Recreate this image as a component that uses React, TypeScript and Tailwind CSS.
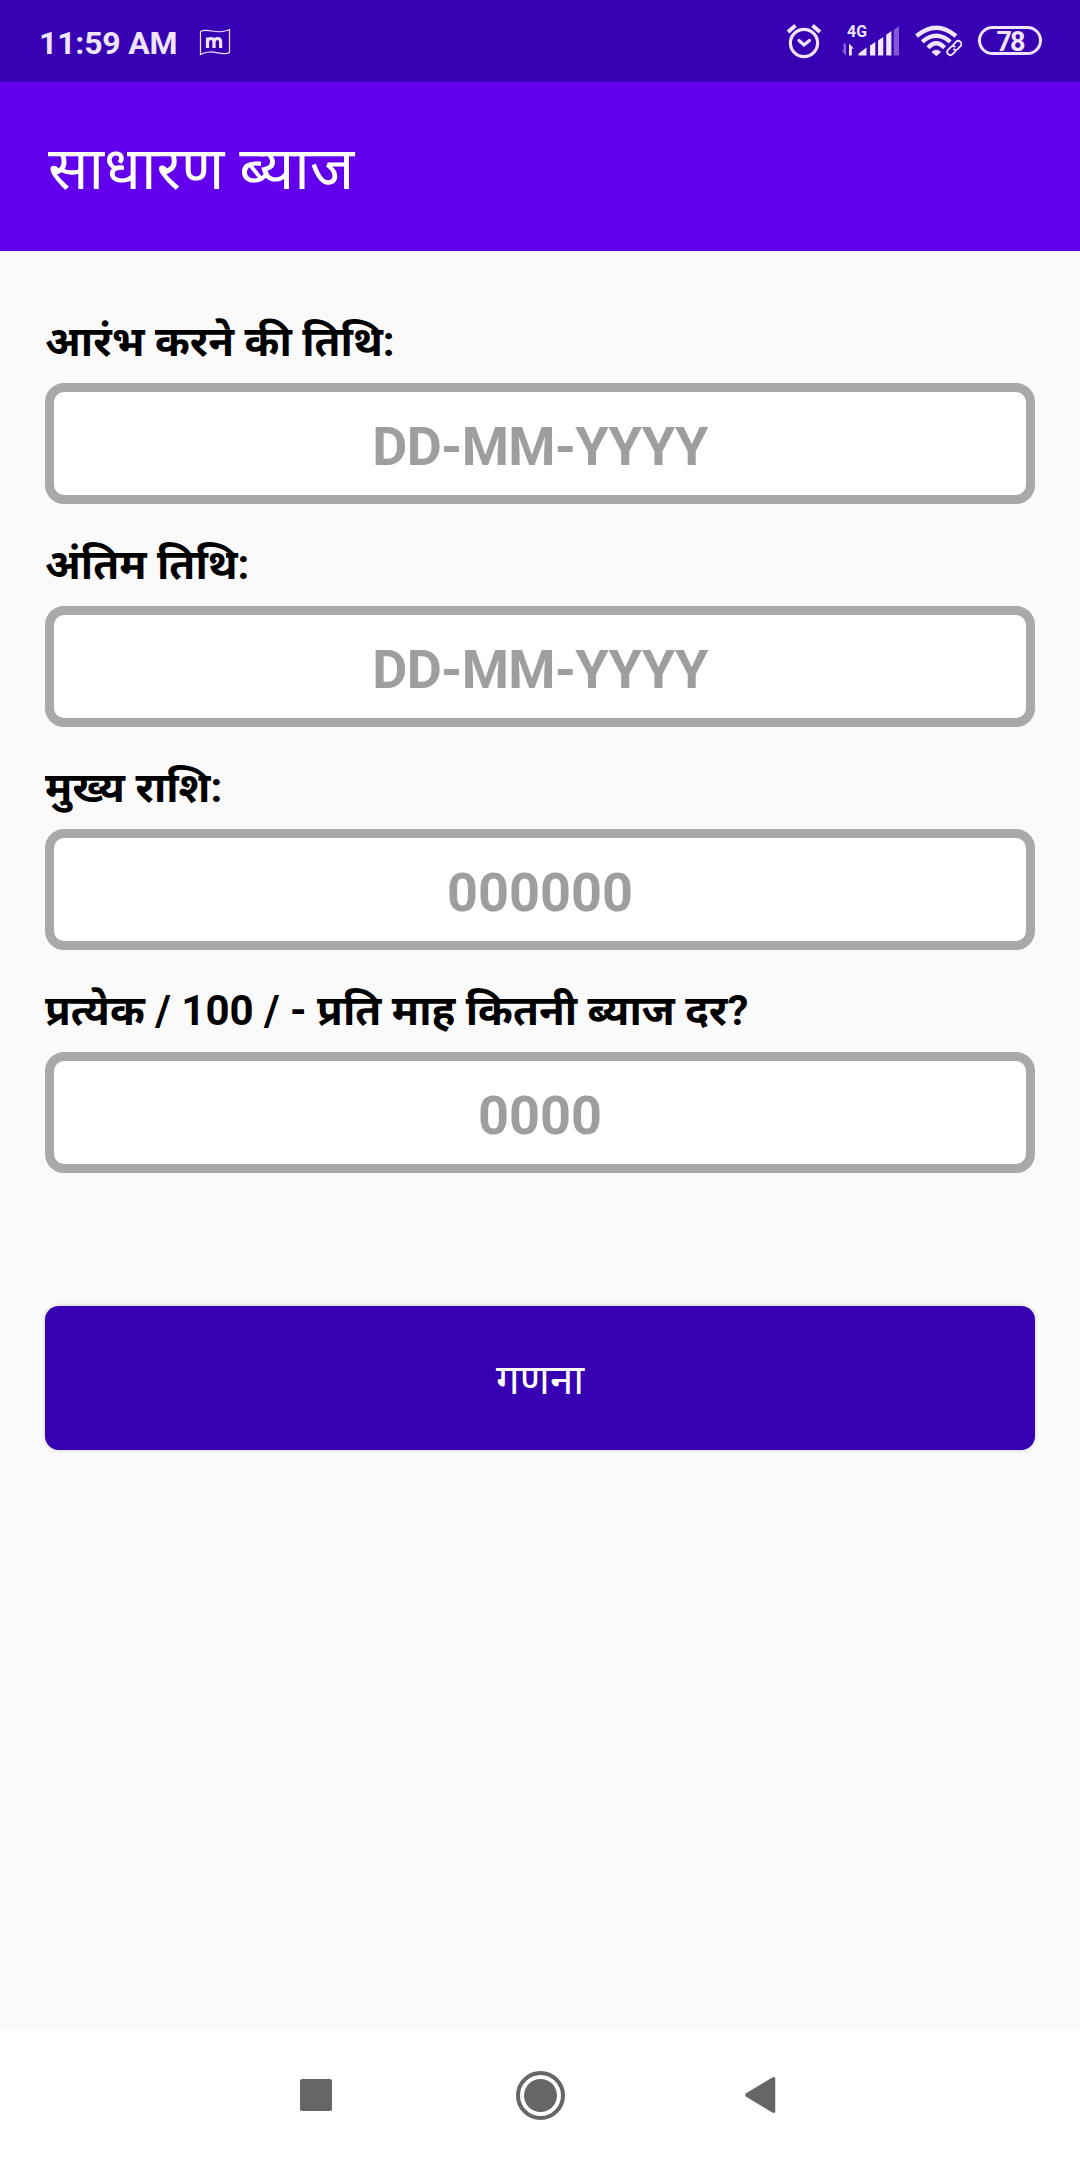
import React, { useState } from 'react';

interface Field {
  id: string;
  label: string;
  placeholder: string;
}

const fields: Field[] = [
  { id: 'start', label: 'आरंभ करने की तिथि:', placeholder: 'DD-MM-YYYY' },
  { id: 'end', label: 'अंतिम तिथि:', placeholder: 'DD-MM-YYYY' },
  { id: 'principal', label: 'मुख्य राशि:', placeholder: '000000' },
  { id: 'rate', label: 'प्रत्येक / 100 / - प्रति माह कितनी ब्याज दर?', placeholder: '0000' },
];

function FlagIcon() {
  return (
    <svg width="32" height="30" viewBox="0 0 32 30" fill="none" stroke="#f0e4ff">
      <path d="M1.5 26.500V3.500C8 0 15 5 23 3.500C26 3 29 2.500 30.500 1.500V24.500C25 28 16 23 10 24C6 24.500 3 25.500 1.500 26.500Z" strokeWidth="1.2" />
      <path d="M8.500 20V9.500M8.500 13.500Q9 10.500 11.800 10.500Q15 10.500 15 14V20M15 14Q15.500 10.500 18.500 10.500Q21.600 10.500 21.600 14V20" strokeWidth="3.200" />
    </svg>
  );
}

function AlarmIcon() {
  return (
    <svg width="36" height="36" viewBox="0 0 36 36" fill="none" stroke="#f0e4ff" strokeWidth="3.200" strokeLinecap="round">
      <circle cx="18" cy="20" r="13.600" />
      <path d="M2 9L9.500 2.500M26.500 2.500L34 9" strokeWidth="4" strokeLinecap="butt" />
      <path d="M13 17.500L18 22L23.500 17.500" />
    </svg>
  );
}

function SignalIcon() {
  return (
    <svg width="58" height="34" viewBox="0 0 58 34" fill="#f0e4ff">
      <text x="6" y="13.500" fontSize="16.500" fontWeight="700" fontFamily="Roboto" textLength="20" lengthAdjust="spacingAndGlyphs">4G</text>
      <path d="M5 20.500V32.500L0.500 27.500H2.500V20.500Z" fill="#8b62da" />
      <path d="M8 20.500L12.800 25.500H10.800V32.500H8Z" />
      <path d="M17.500 32.500V30.500L25.500 24.500V32.500Z" />
      <path d="M29 32.500V22.500L34.300 19V32.500Z" />
      <path d="M37 32.500V17.500L42.300 14V32.500Z" />
      <path d="M45.200 32.500V11.800L50.400 8V32.500Z" />
      <path d="M52.700 32.500V7L58 3V32.500Z" fill="#8457d5" />
    </svg>
  );
}

function WifiIcon() {
  return (
    <svg width="48" height="34" viewBox="0 0 48 34" fill="none" stroke="#f0e4ff">
      <path d="M2.500 13Q22.300 -3.500 42 13" strokeWidth="4.300" />
      <path d="M8.300 18.800Q22.300 6.800 36.300 18.800" strokeWidth="4.300" />
      <path d="M14 24.800Q22.300 15.700 30.600 24.800" strokeWidth="4.300" />
      <path d="M18.500 29Q22.300 26 26.100 29L22.300 32.300Z" fill="#f0e4ff" strokeWidth="1.500" strokeLinejoin="round" />
      {/* Link badge, with a gap cut out of the arcs behind it */}
      <g transform="translate(40.300 25) rotate(-45)" strokeWidth="1.900">
        <rect x="-10" y="-4.500" width="20" height="9" rx="4.500" fill="#3700b3" stroke="none" />
        <path d="M-1 3.100H-5.500A3.100 3.100 0 0 1 -5.500 -3.100H-1.500A3 3 0 0 1 1.300 0" />
        <path d="M1 -3.100H5.500A3.100 3.100 0 0 1 5.500 3.100H1.500A3 3 0 0 1 -1.300 0" />
      </g>
    </svg>
  );
}

function StatusBar() {
  return (
    <div className="flex h-[82px] shrink-0 items-start bg-[#3700b3] pl-[39px] pr-[38px] text-[#f0e4ff]">
      <span className="mt-[23px] w-[140px] whitespace-nowrap text-[32px] font-bold leading-[40px] tracking-[-0.2px]">11:59 AM</span>
      <div className="ml-5 mt-7">
        <FlagIcon />
      </div>
      <div className="ml-auto mt-[23px]">
        <AlarmIcon />
      </div>
      <div className="ml-[19px] mt-[23px]">
        <SignalIcon />
      </div>
      <div className="ml-[15px] mt-[23px]">
        <WifiIcon />
      </div>
      <div className="ml-4 mt-[26px] flex h-[29px] w-[64px] items-center justify-center rounded-full border-3 border-[#f0e4ff] pt-[3px] text-[27px] font-bold leading-none tracking-[-2px]">
        78
      </div>
    </div>
  );
}

function NavBar() {
  return (
    <div className="flex h-[130px] shrink-0 items-center bg-white pl-[300px]">
      <div className="h-8 w-8 rounded-[2px] bg-[#666666]" />
      <svg className="ml-[184px]" width="49" height="49" viewBox="0 0 49 49">
        <circle cx="24.500" cy="24.500" r="22.500" fill="none" stroke="#666666" strokeWidth="4" />
        <circle cx="24.500" cy="24.500" r="16.500" fill="#666666" />
      </svg>
      <svg className="ml-[180px]" width="31" height="36" viewBox="0 0 31 36">
        <path d="M1.500 17L28 1L29.500 1V35H28L1.500 19Q0.500 18 1.500 17Z" fill="#666666" stroke="#666666" strokeWidth="1.500" strokeLinejoin="round" />
      </svg>
    </div>
  );
}

export default function App() {
  const [values, setValues] = useState<Record<string, string>>({});

  const handleChange = (id: string, value: string) => {
    setValues(prev => ({ ...prev, [id]: value }));
  };

  return (
    <div className="flex h-[2160px] w-[1080px] flex-col overflow-hidden bg-[#fafafa] font-[Roboto,'Noto_Sans_Devanagari','Noto_Sans',sans-serif]">
      <StatusBar />

      {/* App Bar */}
      <header className="flex h-[169px] shrink-0 items-center bg-[#6200ee] pl-12 pt-[5px]">
        <h1 className="text-[60px] leading-[80px] text-white">साधारण ब्याज</h1>
      </header>

      <form className="flex flex-1 flex-col px-[45px] pt-[61px]" onSubmit={(e) => e.preventDefault()}>
        {fields.map(field => (
          <div key={field.id} className="mb-[31px] flex flex-col">
            <label htmlFor={field.id} className="h-[71px] whitespace-nowrap text-[42px] font-bold leading-[60px] text-black">
              {field.label}
            </label>
            <input
              id={field.id}
              value={values[field.id] || ''}
              onChange={(e) => handleChange(field.id, e.target.value)}
              placeholder={field.placeholder}
              className={`h-[121px] w-full rounded-[19px] border-9 border-[#a9a9a9] bg-white pt-[5px] text-center text-[54px] font-bold text-black outline-none placeholder:text-[#9e9e9e] ${
                field.placeholder.startsWith('DD') ? 'tracking-[-0.7px]' : ''
              }`}
            />
          </div>
        ))}

        <button
          type="submit"
          className="mt-[102px] h-[144px] w-full rounded-[14px] bg-[#3700b3] pt-[3px] text-[42px] text-white shadow-[0_0_4px_rgba(0,0,0,0.2)]"
        >
          गणना
        </button>
      </form>

      <NavBar />
    </div>
  );
}
